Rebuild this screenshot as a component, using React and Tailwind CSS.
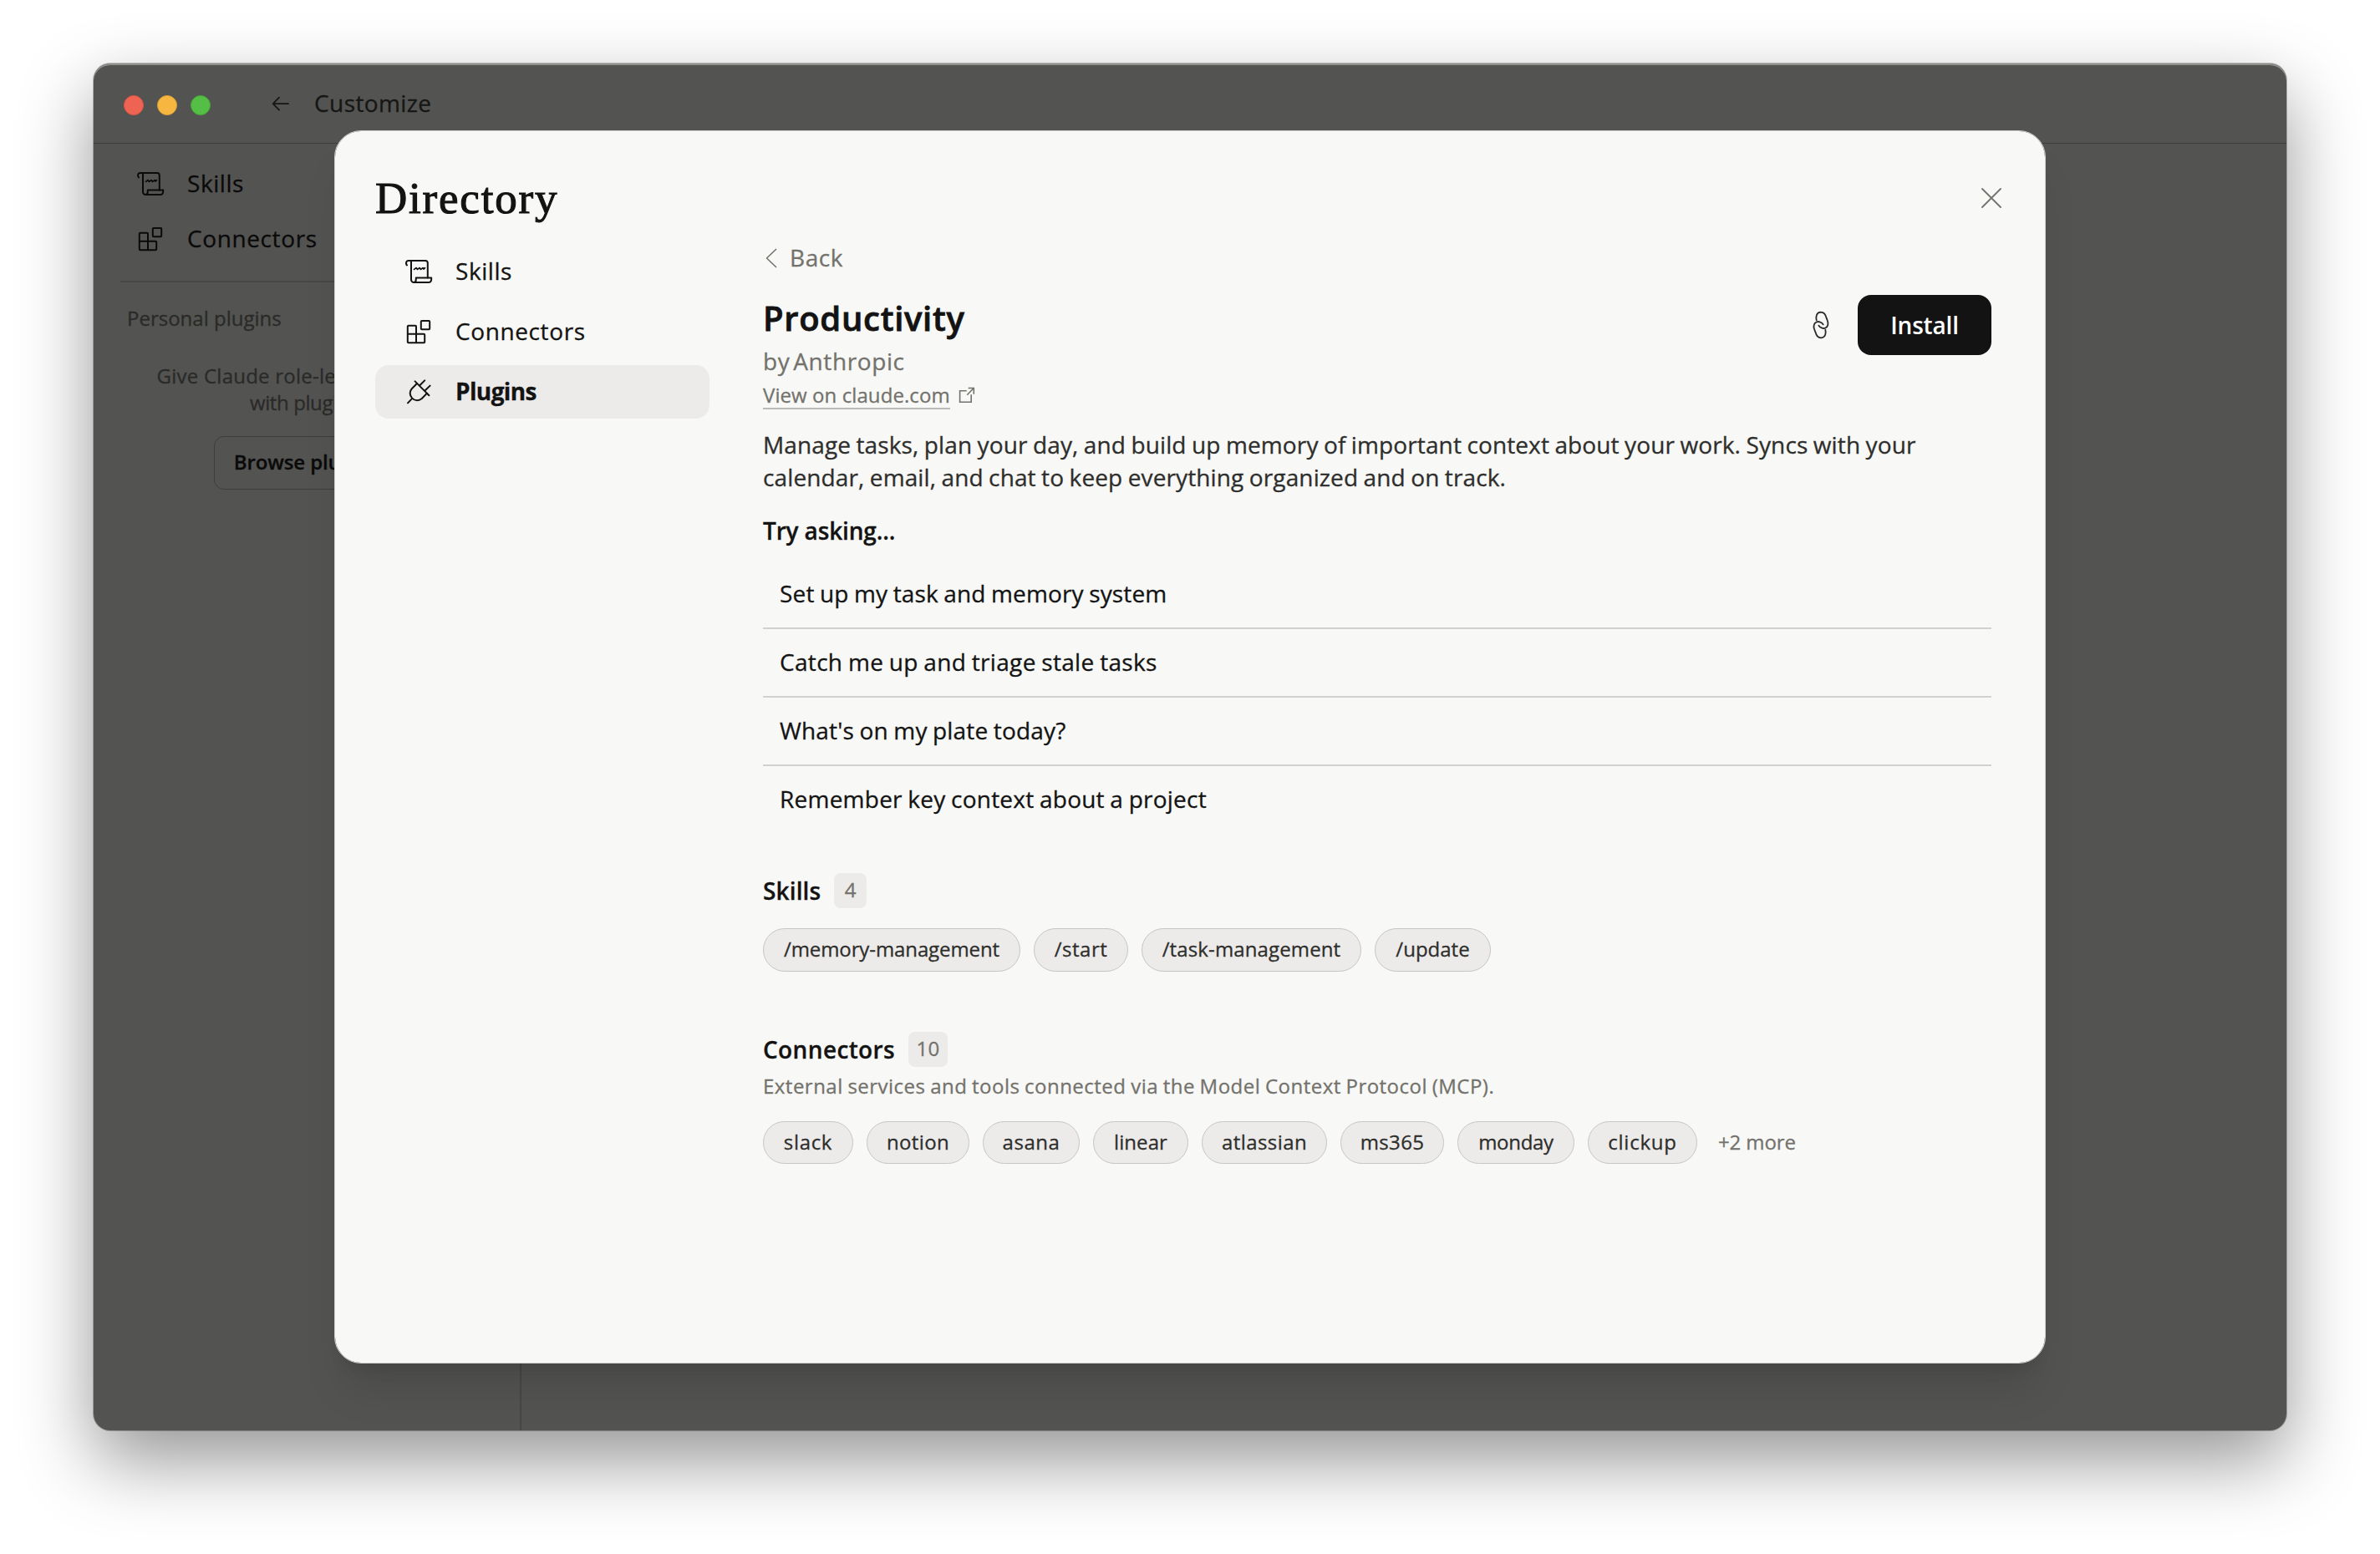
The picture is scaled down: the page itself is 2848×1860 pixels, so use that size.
import React from "react";

const PROMPTS = [
  { text: "Set up my task and memory system", tracking: "tracking-[0.15px]" },
  { text: "Catch me up and triage stale tasks", tracking: "tracking-[0.32px]" },
  { text: "What's on my plate today?", tracking: "tracking-[0.17px]" },
  { text: "Remember key context about a project", tracking: "tracking-[0.24px]" },
];

const SKILLS = [
  { label: "/memory-management", style: "w-[308px] tracking-[-0.1px]" },
  { label: "/start", style: "w-[113px] tracking-[0.5px]" },
  { label: "/task-management", style: "w-[263px] tracking-[0.13px]" },
  { label: "/update", style: "w-[139px]" },
];

const CONNECTORS = [
  { label: "slack", style: "w-[108px] tracking-[0.67px]" },
  { label: "notion", style: "w-[123px] tracking-[0.36px]" },
  { label: "asana", style: "w-[116px] tracking-[0.54px]" },
  { label: "linear", style: "w-[114px] tracking-[0.07px]" },
  { label: "atlassian", style: "w-[150px] tracking-[0.43px]" },
  { label: "ms365", style: "w-[124px] tracking-[0.35px]" },
  { label: "monday", style: "w-[140px] tracking-[-0.28px]" },
  { label: "clickup", style: "w-[131px] tracking-[0.76px]" },
];

const iconProps = {
  viewBox: "0 0 20 20",
  fill: "none",
  stroke: "currentColor",
  strokeWidth: 1,
  strokeLinecap: "round",
  strokeLinejoin: "round",
  className: "size-10 shrink-0",
};

const ScrollIcon = () => (
  <svg {...iconProps}>
    <path d="M3 6.7C2.2 6 2.3 4 3.9 4H14a1.4 1.4 0 0 1 1.4 1.4v8.8" />
    <path d="M5.5 4v11.4A1.6 1.6 0 0 0 7.1 17h8.7c1.1 0 1.8-.8 1.8-1.9v-.9H8.4v1.1c0 1-.5 1.7-1.3 1.7" />
    <path d="M7.3 9.2l1.2-.9.8.9 1.2-.9.8.9 1.2-.9.5.7.7-.7" strokeWidth="0.9" />
  </svg>
);

const BlocksIcon = () => (
  <svg {...iconProps}>
    <rect x="11.4" y="4" width="5.2" height="5.1" rx="0.5" />
    <path d="M8.5 11.9V7.4a.5.5 0 0 0-.5-.5H3.9a.5.5 0 0 0-.5.5v9.2a.5.5 0 0 0 .5.5h9.2a.5.5 0 0 0 .5-.5v-4.2a.5.5 0 0 0-.5-.5H3.4M8.5 11.9v5.2" />
  </svg>
);

const PlugIcon = () => (
  <svg {...iconProps}>
    <path d="M3.5 17.2l2.4-2.5M7.8 4.2l8.4 8.4M10.9 6.4l2.7-2.7M13.9 9.6l2.9-2.8" />
    <path d="M9 5.5L5.9 8.6c-1.5 1.6-1.4 4.1.2 5.7 1.6 1.7 4.2 1.7 5.8.2l3-3.1" />
  </svg>
);

const LinkIcon = () => (
  <svg
    viewBox="0 0 120 120"
    fill="none"
    stroke="currentColor"
    strokeWidth="5.5"
    strokeLinecap="round"
    className="size-10 shrink-0"
  >
    <path d="M44 43C41 30 44 15 59 14c13 0 17 8 21 21 4 11 8 17 5 25-3 10-13 14-21 11-6-2-10-5-12-9" />
    <path d="M76 77c3 13 0 28-15 29-13 0-17-8-21-21-4-11-8-17-5-25 3-10 13-14 21-11 6 2 10 5 12 9" />
  </svg>
);

const NavItem = ({ icon, label, className }) => (
  <div className={`flex items-center gap-6 text-[28px] ${className}`}>
    {icon}
    <span>{label}</span>
  </div>
);

const Chip = ({ label, className }) => (
  <span
    className={`flex items-center justify-center whitespace-nowrap rounded-full border border-[#c6c6c4] bg-[#ecebe9] text-[24px] text-[#2e2e2c] ${className}`}
  >
    {label}
  </span>
);

const SectionTitle = ({ title, count, badgeClass, className }) => (
  <div className={`flex h-[42px] items-center gap-4 ${className}`}>
    <h3 className="text-[28px] font-semibold leading-[42px]">{title}</h3>
    <span
      className={`flex h-[42px] items-center justify-center rounded-lg bg-[#ecebe9] pb-[3px] text-[24px] text-[#73726c] ${badgeClass}`}
    >
      {count}
    </span>
  </div>
);

const TitleBar = () => (
  <header className="flex h-24 shrink-0 items-center border-b border-[#3e3e3c] pl-9">
    <div className="flex gap-4 pt-[5px]">
      <span className="size-6 rounded-full border border-[#d95548] bg-[#ee6352]" />
      <span className="size-6 rounded-full border border-[#dda136] bg-[#f6b640]" />
      <span className="size-6 rounded-full border border-[#49a53a] bg-[#55be46]" />
    </div>
    <svg
      viewBox="0 0 24 24"
      fill="none"
      stroke="currentColor"
      strokeWidth="1.8"
      strokeLinecap="round"
      strokeLinejoin="round"
      className="ml-[72px] size-6 text-[#161615]"
    >
      <path d="M21 12.2H3M10 4.7l-7.3 7.5 7.3 7.5" />
    </svg>
    <span className="ml-7 pb-0.5 text-[28px] leading-10 tracking-[0.41px] text-[#161615]">Customize</span>
  </header>
);

const Sidebar = () => (
  <aside className="w-[512px] shrink-0 border-r-2 border-[#474745] pt-4">
    <nav className="flex flex-col gap-1 text-[#0a0a0a]">
      <NavItem icon={<ScrollIcon />} label="Skills" className="h-[62px] pl-12 tracking-[0.55px]" />
      <NavItem icon={<BlocksIcon />} label="Connectors" className="h-[62px] pl-12 tracking-[0.61px]" />
    </nav>
    <div className="mx-8 mt-5 h-0.5 bg-[#474745]" />
    <h2 className="ml-10 mt-[27px] text-[24px] leading-8 text-[#2a2a29]">Personal plugins</h2>
    <p className="mt-[37px] text-center text-[24px] leading-8 text-[#2a2a29]">
      <span className="tracking-[0.24px]">Give Claude role-level expertise</span>
      <br />
      <span className="tracking-[-0.4px]">with plugins.</span>
    </p>
    <button className="mx-auto mt-6 flex h-16 w-[222px] items-center justify-center rounded-xl border border-[#3e3e3c] pb-0.5 text-[24px] font-semibold tracking-[-0.1px] text-[#0a0a0a]">
      Browse plugins
    </button>
  </aside>
);

const PluginDetail = () => (
  <section className="flex-1">
    <button className="flex h-[30px] items-center text-[28px] leading-[30px] tracking-[0.58px] text-[#73726c]">
      <svg viewBox="0 0 32 32" fill="none" stroke="currentColor" strokeWidth="1.6" strokeLinejoin="round" className="size-8">
        <path d="M16 6L4.5 17 16 28" />
      </svg>
      Back
    </button>

    <div className="mt-[30px] flex items-start justify-between">
      <div>
        <h2 className="text-[40px] font-semibold leading-14 tracking-[0.7px] [-webkit-text-stroke:0.8px]">
          Productivity
        </h2>
        <p className="mt-[3px] text-[28px] leading-10 tracking-[0.6px] text-[#73726c] [word-spacing:-4px]">
          by Anthropic
        </p>
        <a className="mt-1 flex items-start gap-2.5 text-[24px] leading-8 text-[#73726c]">
          <span className="border-b-2 border-[#bababa] tracking-[0.08px]">
            <span className="relative top-px">View on claude.com</span>
          </span>
          <svg viewBox="0 0 20 20" fill="none" stroke="currentColor" strokeWidth="1.6" className="mt-[7px] size-5">
            <path d="M9.7 4.8H1.6v13.4h13.6V9.3M11.7 1.5h6.6v7.2M18.2 1.5l-7.9 8.2" />
          </svg>
        </a>
      </div>
      <div className="flex items-center gap-6">
        <span className="text-[#2a2a28]">
          <LinkIcon />
        </span>
        <button className="h-[72px] w-[160px] rounded-2xl bg-[#131313] text-[28px] font-semibold tracking-[-0.18px] text-white [-webkit-text-stroke:0px]">
          Install
        </button>
      </div>
    </div>

    <p className="mt-[23px] text-[28px] leading-[39px] tracking-[0.12px] text-[#2e2e2c] [word-spacing:-1px]">
      Manage tasks, plan your day, and build up memory of important context about your work. Syncs with your
      calendar, email, and chat to keep everything organized and on track.
    </p>

    <h3 className="mt-6 text-[28px] font-semibold leading-10 tracking-[-0.15px]">Try asking...</h3>
    <ul className="mt-4">
      {PROMPTS.map(({ text, tracking }) => (
        <li
          key={text}
          className={`flex h-[82px] items-center border-b-2 border-[#d1d1cf] pb-0.5 pl-5 text-[28px] [word-spacing:-1px] last:h-20 last:border-b-0 ${tracking}`}
        >
          {text}
        </li>
      ))}
    </ul>

    <SectionTitle title="Skills" count="4" className="mt-12 tracking-[0.13px]" badgeClass="w-[39px]" />
    <div className="mt-6 flex gap-4">
      {SKILLS.map(({ label, style }) => (
        <Chip key={label} label={label} className={`h-[52px] pb-[3px] ${style}`} />
      ))}
    </div>

    <SectionTitle title="Connectors" count="10" className="mt-[72px] tracking-[0.37px]" badgeClass="w-[47px]" />
    <p className="mt-[7px] text-[24px] leading-8 tracking-[0.48px] text-[#73726c] [word-spacing:-1px]">
      External services and tools connected via the Model Context Protocol (MCP).
    </p>
    <div className="mt-[26px] flex gap-4">
      {CONNECTORS.map(({ label, style }) => (
        <Chip key={label} label={label} className={`h-[51px] pb-px ${style}`} />
      ))}
      <span className="flex items-center pb-px pl-[9px] text-[24px] tracking-[-0.11px] text-[#73726c]">+2 more</span>
    </div>
  </section>
);

const DirectoryModal = () => (
  <div className="h-[1476px] w-[2048px] rounded-[32px] border border-[#cfcfcd] bg-[#f8f8f6] bg-clip-padding pl-12 pr-16 pt-12 text-[#131313] shadow-[0_40px_50px_-10px_rgba(0,0,0,0.1),0_16px_20px_-12px_rgba(0,0,0,0.1)]">
    <div className="flex h-16 items-center justify-between">
      <h1 className="font-['Liberation_Serif',serif] text-[53px] leading-16 tracking-[1.8px] [-webkit-text-stroke:1.1px]">
        Directory
      </h1>
      <svg
        viewBox="0 0 24 24"
        fill="none"
        stroke="#73726c"
        strokeWidth="1.8"
        strokeLinecap="round"
        className="-mr-3 size-6"
      >
        <path d="M1 1l22 22M23 1L1 23" />
      </svg>
    </div>
    <div className="mt-6 flex gap-16">
      <nav className="flex w-[400px] flex-col gap-2">
        <NavItem icon={<ScrollIcon />} label="Skills" className="h-16 pb-0.5 pl-8 tracking-[0.55px]" />
        <NavItem icon={<BlocksIcon />} label="Connectors" className="h-16 pb-0.5 pl-8 tracking-[0.61px]" />
        <NavItem
          icon={<PlugIcon />}
          label="Plugins"
          className="h-16 rounded-2xl bg-[#ecebe9] pb-0.5 pl-8 font-bold tracking-[-0.63px]"
        />
      </nav>
      <PluginDetail />
    </div>
  </div>
);

export default function App() {
  return (
    <div className="h-[1860px] w-[2848px] overflow-hidden bg-white px-28 pt-[76px] font-['Open_Sans',sans-serif] [-webkit-text-stroke:0.3px]">
      <div className="relative flex h-[1636px] flex-col overflow-clip rounded-[20px] bg-[#535351] shadow-[inset_0_2px_0_#8f8f8e,0_0_0_1px_rgba(0,0,0,0.25),0_36px_88px_rgba(0,0,0,0.42)]">
        <TitleBar />
        <div className="flex flex-1">
          <Sidebar />
          <main className="flex-1" />
        </div>
        {/* Directory dialog on top of the dimmed window */}
        <div className="absolute inset-0 flex items-start justify-center pt-20">
          <DirectoryModal />
        </div>
      </div>
    </div>
  );
}
